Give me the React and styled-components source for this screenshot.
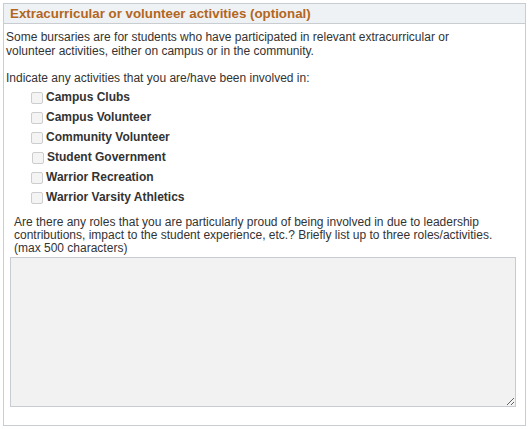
import React from "react"
import styled, { createGlobalStyle } from "styled-components"

const GlobalStyle = createGlobalStyle`
  html, body {
    margin: 0;
    padding: 0;
    background: #ffffff;
  }
  body {
    padding: 3px;
    font-family: "Liberation Sans", Arial, sans-serif;
    color: #333333;
  }
`

const Group = styled.section`
  box-sizing: border-box;
  width: 523px;
  height: 423px;
  border: 1px solid #c8cdd2;
  display: flex;
  flex-direction: column;
`

const Header = styled.h2`
  margin: 0;
  box-sizing: border-box;
  height: 20px;
  padding: 0 0 0 6px;
  background: #eef2f4;
  border-bottom: 1px solid #c8cdd2;
  display: flex;
  align-items: center;
  font-size: 13.33px;
  font-weight: bold;
  color: #b3661e;
`

const Body = styled.div`
  padding: 7px 2px 0;
  font-size: 12px;
  line-height: 13.8px;
`

const Intro = styled.p`
  margin: 0;
`

const Options = styled.ul`
  list-style: none;
  margin: 2px 0 0;
  padding: 0 0 0 25px;
`

const Option = styled.li`
  height: 20px;
  display: flex;
  align-items: center;
  gap: 3px;
  font-weight: bold;
  padding-left: ${(p) => (p.$nudge ? "1px" : "0")};
`

const Box = styled.input`
  appearance: none;
  margin: 0;
  box-sizing: border-box;
  width: 12px;
  height: 12px;
  border: 1px solid #cdcdcd;
  border-radius: 2px;
  background: #f4f4f4;
`

const Question = styled.p`
  margin: 8px 0 0;
  padding-left: 8px;
  line-height: 13px;
`

const Answer = styled.textarea`
  display: block;
  box-sizing: border-box;
  margin: 2px 0 0 4px;
  width: 506px;
  height: 150px;
  border: 1px solid #c6ccd2;
  background: #f2f2f2;
  font-family: "Liberation Sans", Arial, sans-serif;
  font-size: 12px;
  outline: none;
`

const activities = [
  "Campus Clubs",
  "Campus Volunteer",
  "Community Volunteer",
  "Student Government",
  "Warrior Recreation",
  "Warrior Varsity Athletics",
]

export default function App() {
  return (
    <>
      <GlobalStyle />
      <Group>
        <Header>Extracurricular or volunteer activities (optional)</Header>
        <Body>
          <Intro>
            Some bursaries are for students who have participated in relevant extracurricular or
            <br />
            volunteer activities, either on campus or in the community.
            <br />
            <br />
            Indicate any activities that you are/have been involved in:
          </Intro>
          <Options>
            {activities.map((name) => (
              <Option key={name} $nudge={name === "Student Government"}>
                <Box type="checkbox" disabled />
                {name}
              </Option>
            ))}
          </Options>
          <Question>
            Are there any roles that you are particularly proud of being involved in due to leadership
            <br />
            contributions, impact to the student experience, etc.? Briefly list up to three roles/activities.
            <br />
            (max 500 characters)
          </Question>
          <Answer readOnly />
        </Body>
      </Group>
    </>
  )
}
